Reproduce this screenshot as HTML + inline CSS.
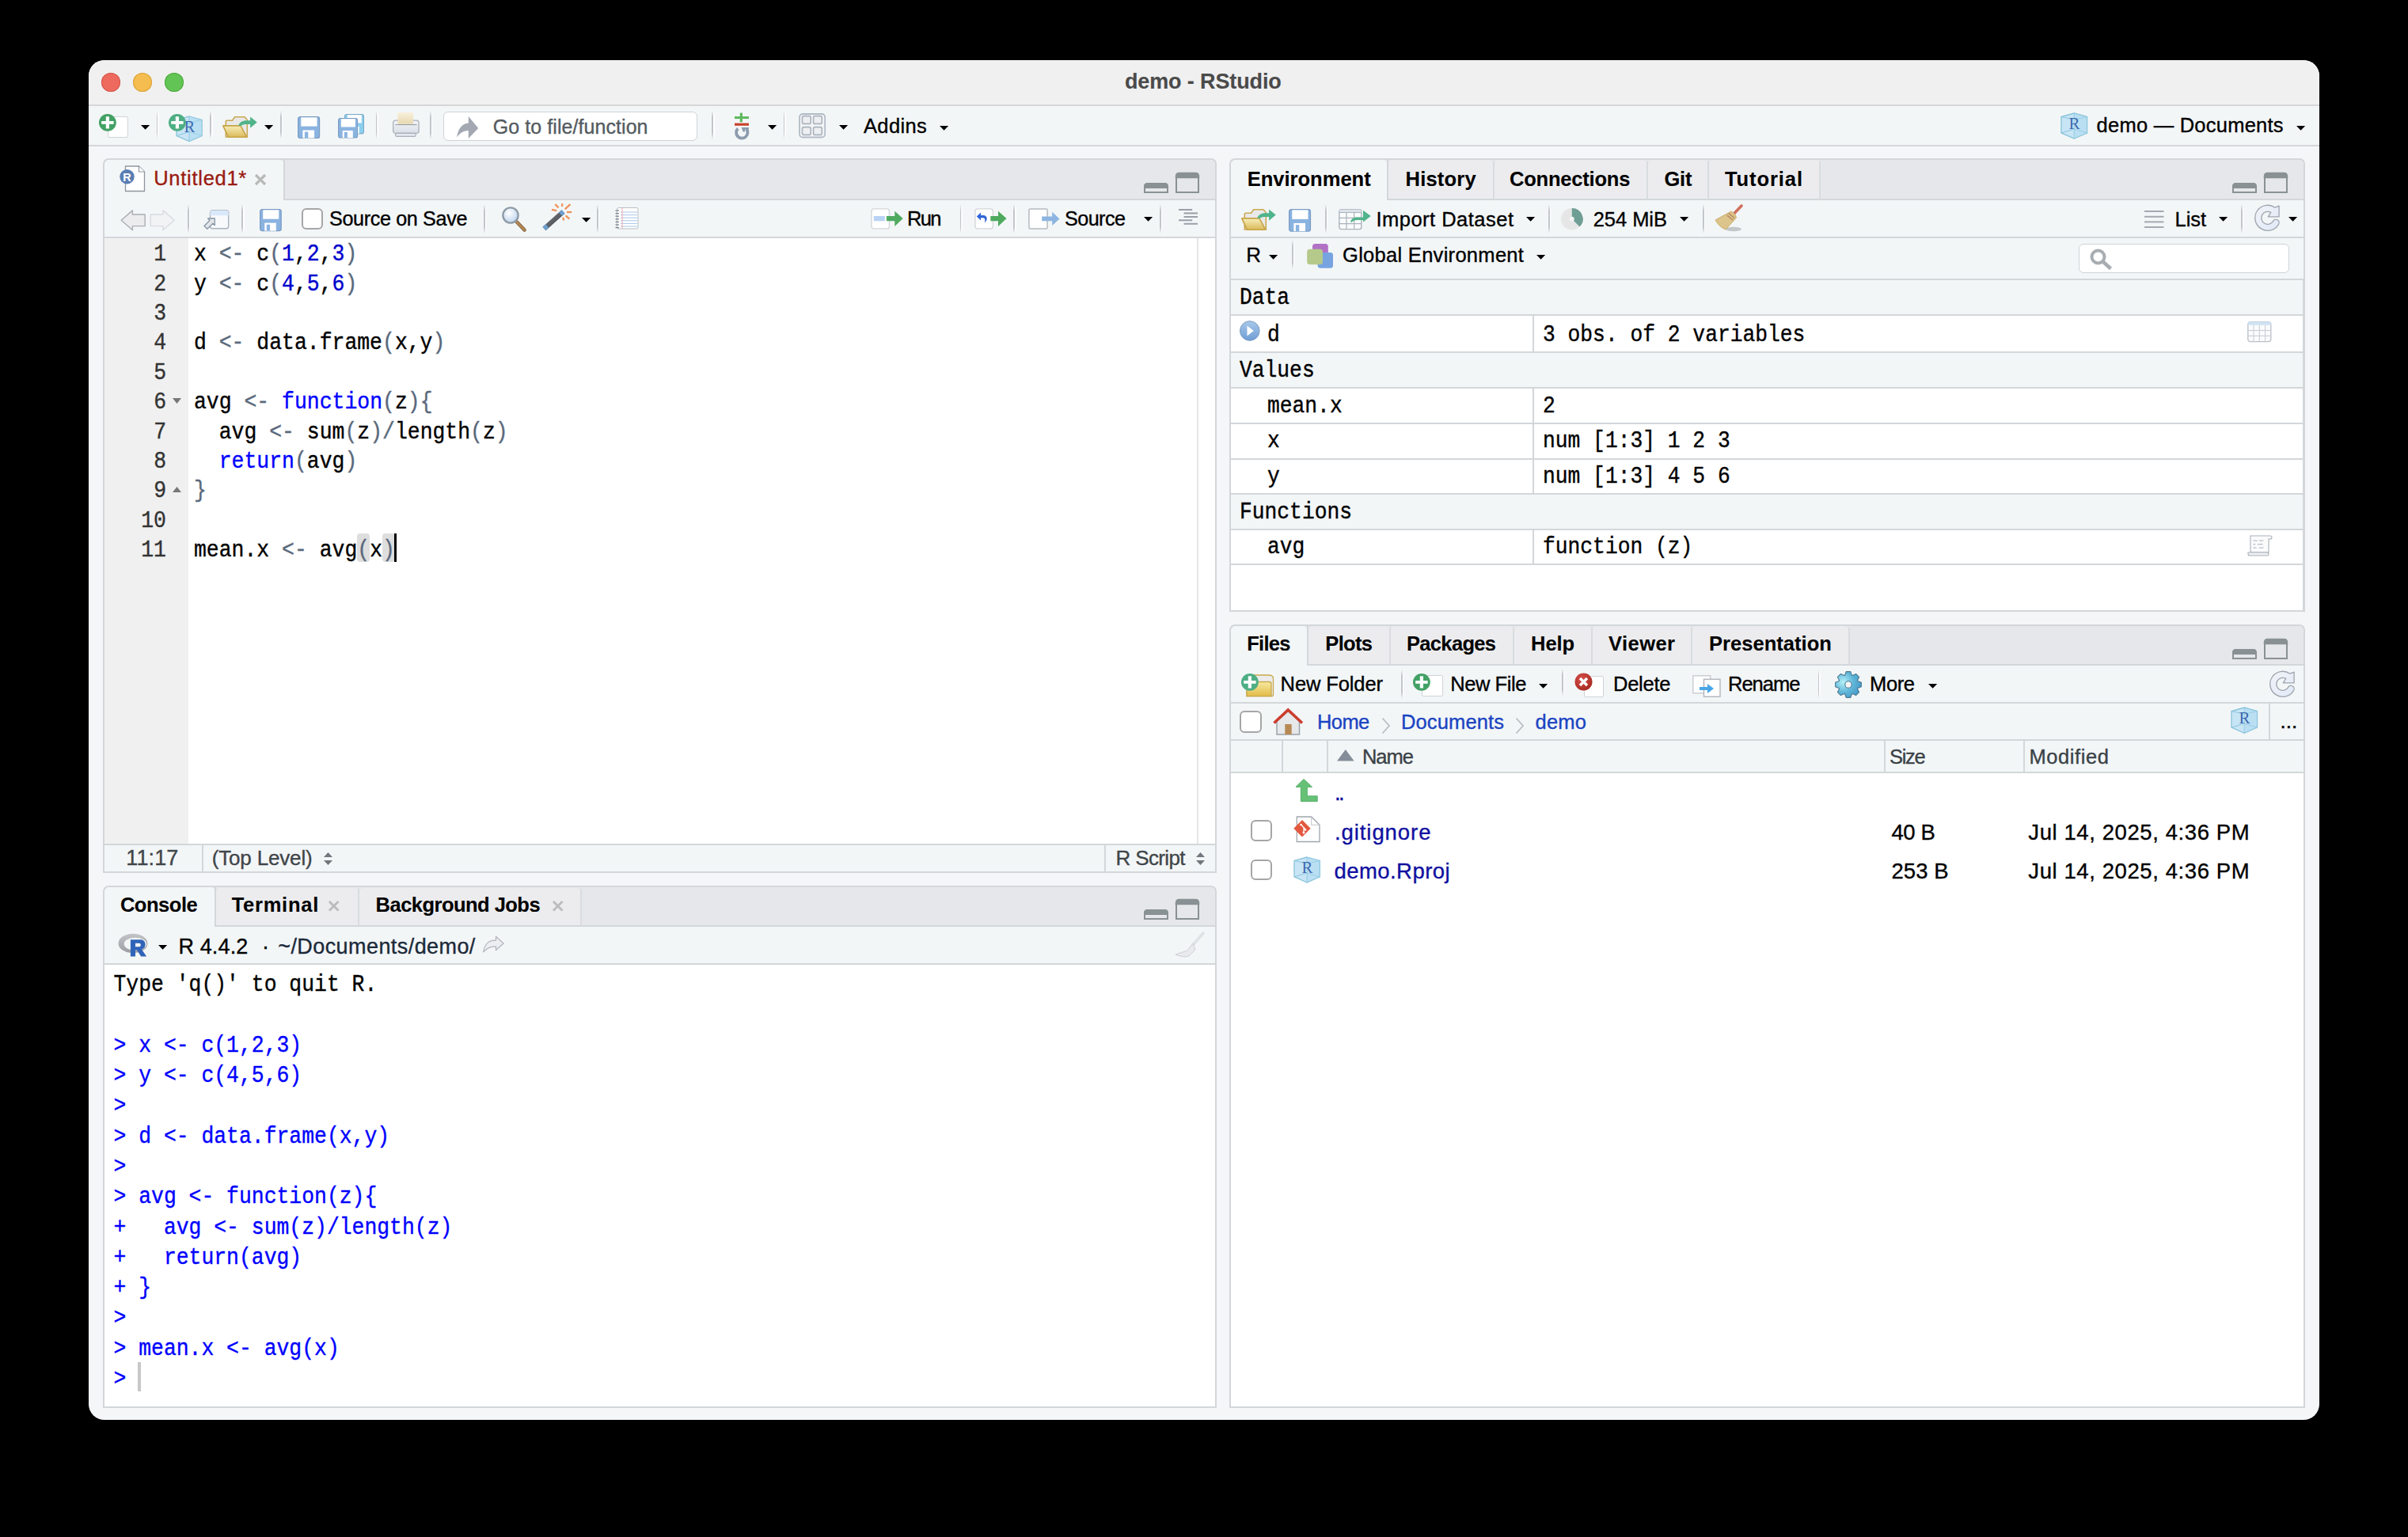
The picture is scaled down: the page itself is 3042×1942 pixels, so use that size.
<!DOCTYPE html>
<html><head><meta charset="utf-8"><title>demo - RStudio</title>
<style>
html,body{margin:0;padding:0;}
body{width:3042px;height:1942px;background:#000;position:relative;overflow:hidden;font-family:'Liberation Sans', sans-serif;}
.a{position:absolute;}
.t{position:absolute;line-height:0;white-space:pre;-webkit-text-stroke:0.35px currentColor;}
svg.a{overflow:visible;}
</style></head><body>
<div class="a" style="left:112.00px;top:76.00px;width:2818.00px;height:1717.50px;background:#f5f6f8;border-radius:20px;"></div><div class="a" style="left:112.00px;top:76.00px;width:2818.00px;height:56.00px;background:#f0f0f0;border-radius:20px 20px 0 0;"></div><div class="a" style="left:112.00px;top:131.50px;width:2818.00px;height:2.20px;background:#d6d6d6;"></div><div class="a" style="left:128.30px;top:91.70px;width:24.00px;height:24.00px;background:#ee6a5f;border-radius:50%;box-shadow:inset 0 0 0 1px #d5554b;"></div><div class="a" style="left:168.20px;top:91.70px;width:24.00px;height:24.00px;background:#f5bd4f;border-radius:50%;box-shadow:inset 0 0 0 1px #d9a23a;"></div><div class="a" style="left:208.10px;top:91.70px;width:24.00px;height:24.00px;background:#61c454;border-radius:50%;box-shadow:inset 0 0 0 1px #4fa93f;"></div><div class="t" style="left:1420.90px;top:102.55px;font-size:27px;color:#4a4a4a;font-weight:bold;-webkit-text-stroke:0.1px currentColor;letter-spacing:-0.121px;">demo - RStudio</div><div class="a" style="left:112.00px;top:133.70px;width:2818.00px;height:48.80px;background:#f3f6f7;"></div><div class="a" style="left:112.00px;top:182.50px;width:2818.00px;height:2.20px;background:#d3d7da;"></div><div class="a" style="left:130.00px;top:199.60px;width:1407.00px;height:903.40px;background:#d3d7da;border-radius:7px 7px 0 0;"></div><div class="a" style="left:132.00px;top:201.60px;width:1403.00px;height:899.40px;background:#ffffff;border-radius:6px 6px 0 0;"></div><div class="a" style="left:132.00px;top:201.60px;width:1403.00px;height:50.40px;background:#e6e7ea;border-radius:6px 6px 0 0;"></div><div class="a" style="left:131.00px;top:251.00px;width:1405.00px;height:2.00px;background:#d3d7da;"></div><div class="a" style="left:132.00px;top:201.60px;width:227.00px;height:51.90px;background:#f3f6f7;border-radius:6px 6px 0 0;"></div><div class="a" style="left:358.00px;top:201.60px;width:2.00px;height:51.40px;background:#d3d7da;"></div><svg class="a" style="left:1445.00px;top:231.00px;" width="31.00" height="13.00" viewBox="0 0 31 13"><path d="M1 12 V5 Q1 1 5 1 H26 Q30 1 30 5 V12 Z" fill="none" stroke="#899194" stroke-width="2"/><path d="M1 6 V5 Q1 1 5 1 H26 Q30 1 30 5 V6 Z" fill="#899194" stroke="#899194" stroke-width="2"/></svg><svg class="a" style="left:1485.00px;top:218.00px;" width="30.00" height="26.00" viewBox="0 0 30 26"><path d="M1 25 V5 Q1 1 5 1 H25 Q29 1 29 5 V25 Z" fill="none" stroke="#899194" stroke-width="2"/><path d="M1 6 V5 Q1 1 5 1 H25 Q29 1 29 5 V6 Z" fill="#899194" stroke="#899194" stroke-width="2.5"/></svg><div class="t" style="left:194.20px;top:225.07px;font-size:25.5px;color:#9a1b12;letter-spacing:0.726px;">Untitled1*</div><div class="a" style="left:132.00px;top:253.00px;width:1403.00px;height:46.00px;background:#f3f6f7;"></div><div class="a" style="left:131.00px;top:298.80px;width:1405.00px;height:2.00px;background:#d3d7da;"></div><div class="t" style="left:416.00px;top:275.68px;font-size:25.2px;color:#000;letter-spacing:-0.371px;">Source on Save</div><div class="t" style="left:1146.00px;top:276.07px;font-size:25.5px;color:#000;letter-spacing:-1.734px;">Run</div><div class="t" style="left:1345.00px;top:276.18px;font-size:25.2px;color:#000;letter-spacing:-0.567px;">Source</div><div class="a" style="left:132.00px;top:301.00px;width:106.00px;height:765.00px;background:#f0f0f0;"></div><div class="a" style="left:1512.25px;top:301.00px;width:1.50px;height:765.00px;background:#e6e6e6;"></div><div class="a" style="left:132.00px;top:1067.00px;width:1403.00px;height:34.00px;background:#f3f6f7;"></div><div class="a" style="left:131.00px;top:1066.00px;width:1405.00px;height:2.00px;background:#d3d7da;"></div><div class="a" style="left:255.00px;top:1068.00px;width:2.00px;height:33.00px;background:#d3d7da;"></div><div class="a" style="left:1395.00px;top:1068.00px;width:2.00px;height:33.00px;background:#d3d7da;"></div><div class="t" style="left:159.30px;top:1084.15px;font-size:27px;color:#3f4549;letter-spacing:0.111px;">11:17</div><div class="t" style="left:267.70px;top:1084.40px;font-size:26px;color:#3f4549;letter-spacing:-0.162px;">(Top Level)</div><div class="t" style="left:1409.60px;top:1084.40px;font-size:26px;color:#3f4549;letter-spacing:-0.665px;">R Script</div><div class="a" style="left:130.00px;top:1119.00px;width:1407.00px;height:660.00px;background:#d3d7da;border-radius:7px 7px 0 0;"></div><div class="a" style="left:132.00px;top:1121.00px;width:1403.00px;height:656.00px;background:#ffffff;border-radius:6px 6px 0 0;"></div><div class="a" style="left:132.00px;top:1121.00px;width:1403.00px;height:48.80px;background:#e6e7ea;border-radius:6px 6px 0 0;"></div><div class="a" style="left:131.00px;top:1168.80px;width:1405.00px;height:2.00px;background:#d3d7da;"></div><div class="a" style="left:132.00px;top:1121.00px;width:139.50px;height:50.30px;background:#f3f6f7;border-radius:6px 6px 0 0;"></div><div class="a" style="left:270.50px;top:1121.00px;width:2.00px;height:49.80px;background:#d3d7da;"></div><div class="a" style="left:272.50px;top:1121.50px;width:180.50px;height:47.30px;background:#ececee;border-radius:6px 6px 0 0;"></div><div class="a" style="left:452.00px;top:1123.00px;width:2.00px;height:46.80px;background:#d9dcdf;"></div><div class="a" style="left:454.00px;top:1121.50px;width:279.70px;height:47.30px;background:#ececee;border-radius:6px 6px 0 0;"></div><div class="a" style="left:732.70px;top:1123.00px;width:2.00px;height:46.80px;background:#d9dcdf;"></div><svg class="a" style="left:1445.00px;top:1149.30px;" width="31.00" height="13.00" viewBox="0 0 31 13"><path d="M1 12 V5 Q1 1 5 1 H26 Q30 1 30 5 V12 Z" fill="none" stroke="#899194" stroke-width="2"/><path d="M1 6 V5 Q1 1 5 1 H26 Q30 1 30 5 V6 Z" fill="#899194" stroke="#899194" stroke-width="2"/></svg><svg class="a" style="left:1485.00px;top:1136.30px;" width="30.00" height="26.00" viewBox="0 0 30 26"><path d="M1 25 V5 Q1 1 5 1 H25 Q29 1 29 5 V25 Z" fill="none" stroke="#899194" stroke-width="2"/><path d="M1 6 V5 Q1 1 5 1 H25 Q29 1 29 5 V6 Z" fill="#899194" stroke="#899194" stroke-width="2.5"/></svg><div class="t" style="left:151.90px;top:1143.08px;font-size:25.5px;color:#000;font-weight:bold;-webkit-text-stroke:0.1px currentColor;letter-spacing:-0.45px;">Console</div><div class="t" style="left:292.70px;top:1143.08px;font-size:25.5px;color:#000;font-weight:bold;-webkit-text-stroke:0.1px currentColor;letter-spacing:0.743px;">Terminal</div><div class="t" style="left:474.60px;top:1143.08px;font-size:25.5px;color:#000;font-weight:bold;-webkit-text-stroke:0.1px currentColor;letter-spacing:-0.527px;">Background Jobs</div><div class="a" style="left:132.00px;top:1171.00px;width:1403.00px;height:46.00px;background:#f3f6f7;"></div><div class="a" style="left:131.00px;top:1216.80px;width:1405.00px;height:2.00px;background:#d3d7da;"></div><div class="t" style="left:225.40px;top:1196.05px;font-size:27px;color:#000;letter-spacing:0.142px;">R 4.4.2</div><div class="t" style="left:331.00px;top:1196.05px;font-size:27px;color:#000;">·</div><div class="t" style="left:351.20px;top:1196.05px;font-size:27px;color:#1c2a3a;letter-spacing:0.426px;">~/Documents/demo/</div><div class="a" style="left:1553.00px;top:199.60px;width:1359.00px;height:573.40px;background:#d3d7da;border-radius:7px 7px 0 0;"></div><div class="a" style="left:1555.00px;top:201.60px;width:1355.00px;height:569.40px;background:#ffffff;border-radius:6px 6px 0 0;"></div><div class="a" style="left:1555.00px;top:201.60px;width:1355.00px;height:50.40px;background:#e6e7ea;border-radius:6px 6px 0 0;"></div><div class="a" style="left:1554.00px;top:251.00px;width:1357.00px;height:2.00px;background:#d3d7da;"></div><div class="a" style="left:1555.00px;top:201.60px;width:197.60px;height:51.90px;background:#f3f6f7;border-radius:6px 6px 0 0;"></div><div class="a" style="left:1751.60px;top:201.60px;width:2.00px;height:51.40px;background:#d3d7da;"></div><div class="a" style="left:1753.60px;top:202.10px;width:132.90px;height:48.90px;background:#ececee;border-radius:6px 6px 0 0;"></div><div class="a" style="left:1885.50px;top:203.60px;width:2.00px;height:48.40px;background:#d9dcdf;"></div><div class="a" style="left:1887.50px;top:202.10px;width:193.50px;height:48.90px;background:#ececee;border-radius:6px 6px 0 0;"></div><div class="a" style="left:2080.00px;top:203.60px;width:2.00px;height:48.40px;background:#d9dcdf;"></div><div class="a" style="left:2082.00px;top:202.10px;width:75.50px;height:48.90px;background:#ececee;border-radius:6px 6px 0 0;"></div><div class="a" style="left:2156.50px;top:203.60px;width:2.00px;height:48.40px;background:#d9dcdf;"></div><div class="a" style="left:2158.50px;top:202.10px;width:140.10px;height:48.90px;background:#ececee;border-radius:6px 6px 0 0;"></div><div class="a" style="left:2297.60px;top:203.60px;width:2.00px;height:48.40px;background:#d9dcdf;"></div><svg class="a" style="left:2820.00px;top:231.00px;" width="31.00" height="13.00" viewBox="0 0 31 13"><path d="M1 12 V5 Q1 1 5 1 H26 Q30 1 30 5 V12 Z" fill="none" stroke="#899194" stroke-width="2"/><path d="M1 6 V5 Q1 1 5 1 H26 Q30 1 30 5 V6 Z" fill="#899194" stroke="#899194" stroke-width="2"/></svg><svg class="a" style="left:2860.00px;top:218.00px;" width="30.00" height="26.00" viewBox="0 0 30 26"><path d="M1 25 V5 Q1 1 5 1 H25 Q29 1 29 5 V25 Z" fill="none" stroke="#899194" stroke-width="2"/><path d="M1 6 V5 Q1 1 5 1 H25 Q29 1 29 5 V6 Z" fill="#899194" stroke="#899194" stroke-width="2.5"/></svg><div class="t" style="left:1575.70px;top:225.57px;font-size:25.5px;color:#000;font-weight:bold;-webkit-text-stroke:0.1px currentColor;letter-spacing:0.014px;">Environment</div><div class="t" style="left:1775.50px;top:225.57px;font-size:25.5px;color:#000;font-weight:bold;-webkit-text-stroke:0.1px currentColor;letter-spacing:0.225px;">History</div><div class="t" style="left:1907.00px;top:225.57px;font-size:25.5px;color:#000;font-weight:bold;-webkit-text-stroke:0.1px currentColor;letter-spacing:-0.203px;">Connections</div><div class="t" style="left:2102.40px;top:225.57px;font-size:25.5px;color:#000;font-weight:bold;-webkit-text-stroke:0.1px currentColor;letter-spacing:-0.21px;">Git</div><div class="t" style="left:2179.00px;top:225.57px;font-size:25.5px;color:#000;font-weight:bold;-webkit-text-stroke:0.1px currentColor;letter-spacing:0.915px;">Tutorial</div><div class="a" style="left:1555.00px;top:253.00px;width:1355.00px;height:46.00px;background:#f3f6f7;"></div><div class="a" style="left:1554.00px;top:298.80px;width:1357.00px;height:2.00px;background:#d3d7da;"></div><div class="t" style="left:1738.50px;top:276.57px;font-size:25.5px;color:#000;letter-spacing:0.482px;">Import Dataset</div><div class="t" style="left:2012.70px;top:276.57px;font-size:25.5px;color:#000;letter-spacing:-0.039px;">254 MiB</div><div class="t" style="left:2747.60px;top:276.57px;font-size:25.5px;color:#000;letter-spacing:-0.093px;">List</div><div class="a" style="left:1555.00px;top:301.00px;width:1355.00px;height:51.50px;background:#f3f6f7;"></div><div class="a" style="left:1554.00px;top:352.00px;width:1357.00px;height:2.00px;background:#d3d7da;"></div><div class="t" style="left:1574.20px;top:321.90px;font-size:26px;color:#000;">R</div><div class="t" style="left:1696.00px;top:322.07px;font-size:25.5px;color:#000;letter-spacing:0.292px;">Global Environment</div><div class="a" style="left:1555.00px;top:354.00px;width:1355.00px;height:43.00px;background:#f3f6f7;"></div><div class="a" style="left:1554.00px;top:397.00px;width:1355.00px;height:2.00px;background:#d3d7da;"></div><div class="t" style="left:1566.00px;top:376.66px;font-size:26.3px;color:#000;font-family:'Liberation Mono', monospace;transform:scaleY(1.12);transform-origin:0 6.84px;">Data</div><div class="a" style="left:1554.00px;top:444.00px;width:1355.00px;height:2.00px;background:#d3d7da;"></div><div class="a" style="left:1936.00px;top:399.00px;width:2.00px;height:46.00px;background:#d3d7da;"></div><div class="t" style="left:1601.00px;top:423.66px;font-size:26.3px;color:#000;font-family:'Liberation Mono', monospace;transform:scaleY(1.12);transform-origin:0 6.84px;">d</div><div class="t" style="left:1949.00px;top:423.66px;font-size:26.3px;color:#000;font-family:'Liberation Mono', monospace;transform:scaleY(1.12);transform-origin:0 6.84px;">3 obs. of 2 variables</div><div class="a" style="left:1555.00px;top:446.00px;width:1355.00px;height:43.00px;background:#f3f6f7;"></div><div class="a" style="left:1554.00px;top:489.00px;width:1355.00px;height:2.00px;background:#d3d7da;"></div><div class="t" style="left:1566.00px;top:468.66px;font-size:26.3px;color:#000;font-family:'Liberation Mono', monospace;transform:scaleY(1.12);transform-origin:0 6.84px;">Values</div><div class="a" style="left:1554.00px;top:534.00px;width:1355.00px;height:2.00px;background:#d3d7da;"></div><div class="a" style="left:1936.00px;top:491.00px;width:2.00px;height:44.00px;background:#d3d7da;"></div><div class="t" style="left:1601.00px;top:513.66px;font-size:26.3px;color:#000;font-family:'Liberation Mono', monospace;transform:scaleY(1.12);transform-origin:0 6.84px;">mean.x</div><div class="t" style="left:1949.00px;top:513.66px;font-size:26.3px;color:#000;font-family:'Liberation Mono', monospace;transform:scaleY(1.12);transform-origin:0 6.84px;">2</div><div class="a" style="left:1554.00px;top:578.50px;width:1355.00px;height:2.00px;background:#d3d7da;"></div><div class="a" style="left:1936.00px;top:536.00px;width:2.00px;height:43.50px;background:#d3d7da;"></div><div class="t" style="left:1601.00px;top:558.16px;font-size:26.3px;color:#000;font-family:'Liberation Mono', monospace;transform:scaleY(1.12);transform-origin:0 6.84px;">x</div><div class="t" style="left:1949.00px;top:558.16px;font-size:26.3px;color:#000;font-family:'Liberation Mono', monospace;transform:scaleY(1.12);transform-origin:0 6.84px;">num [1:3] 1 2 3</div><div class="a" style="left:1554.00px;top:623.00px;width:1355.00px;height:2.00px;background:#d3d7da;"></div><div class="a" style="left:1936.00px;top:580.50px;width:2.00px;height:43.50px;background:#d3d7da;"></div><div class="t" style="left:1601.00px;top:602.66px;font-size:26.3px;color:#000;font-family:'Liberation Mono', monospace;transform:scaleY(1.12);transform-origin:0 6.84px;">y</div><div class="t" style="left:1949.00px;top:602.66px;font-size:26.3px;color:#000;font-family:'Liberation Mono', monospace;transform:scaleY(1.12);transform-origin:0 6.84px;">num [1:3] 4 5 6</div><div class="a" style="left:1555.00px;top:625.00px;width:1355.00px;height:43.00px;background:#f3f6f7;"></div><div class="a" style="left:1554.00px;top:668.00px;width:1355.00px;height:2.00px;background:#d3d7da;"></div><div class="t" style="left:1566.00px;top:647.66px;font-size:26.3px;color:#000;font-family:'Liberation Mono', monospace;transform:scaleY(1.12);transform-origin:0 6.84px;">Functions</div><div class="a" style="left:1554.00px;top:712.00px;width:1355.00px;height:2.00px;background:#d3d7da;"></div><div class="a" style="left:1936.00px;top:670.00px;width:2.00px;height:43.00px;background:#d3d7da;"></div><div class="t" style="left:1601.00px;top:691.66px;font-size:26.3px;color:#000;font-family:'Liberation Mono', monospace;transform:scaleY(1.12);transform-origin:0 6.84px;">avg</div><div class="t" style="left:1949.00px;top:691.66px;font-size:26.3px;color:#000;font-family:'Liberation Mono', monospace;transform:scaleY(1.12);transform-origin:0 6.84px;">function (z)</div><div class="a" style="left:2908.75px;top:353.00px;width:1.50px;height:418.00px;background:#d3d7da;"></div><div class="a" style="left:1553.00px;top:788.50px;width:1359.00px;height:990.50px;background:#d3d7da;border-radius:7px 7px 0 0;"></div><div class="a" style="left:1555.00px;top:790.50px;width:1355.00px;height:986.50px;background:#ffffff;border-radius:6px 6px 0 0;"></div><div class="a" style="left:1555.00px;top:790.50px;width:1355.00px;height:49.50px;background:#e6e7ea;border-radius:6px 6px 0 0;"></div><div class="a" style="left:1554.00px;top:839.00px;width:1357.00px;height:2.00px;background:#d3d7da;"></div><div class="a" style="left:1555.00px;top:790.50px;width:97.40px;height:51.00px;background:#f3f6f7;border-radius:6px 6px 0 0;"></div><div class="a" style="left:1651.40px;top:790.50px;width:2.00px;height:50.50px;background:#d3d7da;"></div><div class="a" style="left:1653.40px;top:791.00px;width:102.20px;height:48.00px;background:#ececee;border-radius:6px 6px 0 0;"></div><div class="a" style="left:1754.60px;top:792.50px;width:2.00px;height:47.50px;background:#d9dcdf;"></div><div class="a" style="left:1756.60px;top:791.00px;width:155.00px;height:48.00px;background:#ececee;border-radius:6px 6px 0 0;"></div><div class="a" style="left:1910.60px;top:792.50px;width:2.00px;height:47.50px;background:#d9dcdf;"></div><div class="a" style="left:1912.60px;top:791.00px;width:98.10px;height:48.00px;background:#ececee;border-radius:6px 6px 0 0;"></div><div class="a" style="left:2009.70px;top:792.50px;width:2.00px;height:47.50px;background:#d9dcdf;"></div><div class="a" style="left:2011.70px;top:791.00px;width:125.10px;height:48.00px;background:#ececee;border-radius:6px 6px 0 0;"></div><div class="a" style="left:2135.80px;top:792.50px;width:2.00px;height:47.50px;background:#d9dcdf;"></div><div class="a" style="left:2137.80px;top:791.00px;width:197.70px;height:48.00px;background:#ececee;border-radius:6px 6px 0 0;"></div><div class="a" style="left:2334.50px;top:792.50px;width:2.00px;height:47.50px;background:#d9dcdf;"></div><svg class="a" style="left:2820.00px;top:819.80px;" width="31.00" height="13.00" viewBox="0 0 31 13"><path d="M1 12 V5 Q1 1 5 1 H26 Q30 1 30 5 V12 Z" fill="none" stroke="#899194" stroke-width="2"/><path d="M1 6 V5 Q1 1 5 1 H26 Q30 1 30 5 V6 Z" fill="#899194" stroke="#899194" stroke-width="2"/></svg><svg class="a" style="left:2860.00px;top:806.80px;" width="30.00" height="26.00" viewBox="0 0 30 26"><path d="M1 25 V5 Q1 1 5 1 H25 Q29 1 29 5 V25 Z" fill="none" stroke="#899194" stroke-width="2"/><path d="M1 6 V5 Q1 1 5 1 H25 Q29 1 29 5 V6 Z" fill="#899194" stroke="#899194" stroke-width="2.5"/></svg><div class="t" style="left:1575.20px;top:813.08px;font-size:25.5px;color:#000;font-weight:bold;-webkit-text-stroke:0.1px currentColor;letter-spacing:-0.729px;">Files</div><div class="t" style="left:1674.30px;top:813.08px;font-size:25.5px;color:#000;font-weight:bold;-webkit-text-stroke:0.1px currentColor;letter-spacing:-0.662px;">Plots</div><div class="t" style="left:1777.00px;top:813.08px;font-size:25.5px;color:#000;font-weight:bold;-webkit-text-stroke:0.1px currentColor;letter-spacing:-0.669px;">Packages</div><div class="t" style="left:1934.00px;top:813.08px;font-size:25.5px;color:#000;font-weight:bold;-webkit-text-stroke:0.1px currentColor;letter-spacing:-0.019px;">Help</div><div class="t" style="left:2032.00px;top:813.08px;font-size:25.5px;color:#000;font-weight:bold;-webkit-text-stroke:0.1px currentColor;letter-spacing:0.449px;">Viewer</div><div class="t" style="left:2159.00px;top:813.08px;font-size:25.5px;color:#000;font-weight:bold;-webkit-text-stroke:0.1px currentColor;letter-spacing:0.041px;">Presentation</div><div class="a" style="left:1555.00px;top:841.00px;width:1355.00px;height:46.20px;background:#f3f6f7;"></div><div class="a" style="left:1554.00px;top:887.00px;width:1357.00px;height:2.00px;background:#d3d7da;"></div><div class="t" style="left:1617.60px;top:863.58px;font-size:25.5px;color:#000;letter-spacing:-0.109px;">New Folder</div><div class="t" style="left:1832.20px;top:863.58px;font-size:25.5px;color:#000;letter-spacing:-0.428px;">New File</div><div class="t" style="left:2038.00px;top:863.58px;font-size:25.5px;color:#000;letter-spacing:-0.264px;">Delete</div><div class="t" style="left:2183.00px;top:863.58px;font-size:25.5px;color:#000;letter-spacing:-0.998px;">Rename</div><div class="t" style="left:2362.00px;top:863.58px;font-size:25.5px;color:#000;letter-spacing:-0.363px;">More</div><div class="a" style="left:1555.00px;top:889.00px;width:1355.00px;height:45.00px;background:#f3f6f7;"></div><div class="a" style="left:1554.00px;top:934.00px;width:1357.00px;height:2.00px;background:#d3d7da;"></div><div class="t" style="left:1664.00px;top:911.58px;font-size:25.5px;color:#1a44c2;letter-spacing:-0.578px;">Home</div><div class="t" style="left:1770.00px;top:911.58px;font-size:25.5px;color:#1a44c2;letter-spacing:0.128px;">Documents</div><div class="t" style="left:1939.60px;top:911.58px;font-size:25.5px;color:#1a44c2;letter-spacing:0.175px;">demo</div><div class="a" style="left:2866.00px;top:889.00px;width:2.00px;height:45.00px;background:#d3d7da;"></div><div class="a" style="left:1555.00px;top:936.00px;width:1355.00px;height:39.00px;background:#f3f6f7;"></div><div class="a" style="left:1554.00px;top:975.00px;width:1357.00px;height:2.00px;background:#d3d7da;"></div><div class="a" style="left:1619.00px;top:936.00px;width:2.00px;height:39.00px;background:#d3d7da;"></div><div class="a" style="left:1676.00px;top:936.00px;width:2.00px;height:39.00px;background:#d3d7da;"></div><div class="a" style="left:2380.20px;top:936.00px;width:2.00px;height:39.00px;background:#d3d7da;"></div><div class="a" style="left:2556.00px;top:936.00px;width:2.00px;height:39.00px;background:#d3d7da;"></div><div class="t" style="left:1721.00px;top:956.08px;font-size:25.5px;color:#3a4247;letter-spacing:-1.045px;">Name</div><div class="t" style="left:2387.00px;top:956.08px;font-size:25.5px;color:#3a4247;letter-spacing:-1.299px;">Size</div><div class="t" style="left:2563.50px;top:956.08px;font-size:25.5px;color:#3a4247;letter-spacing:0.587px;">Modified</div><div class="t" style="left:1686.00px;top:1002.38px;font-size:27.5px;color:#1010a0;letter-spacing:-2.59px;">..</div><div class="t" style="left:1685.90px;top:1051.58px;font-size:27.5px;color:#1010a0;letter-spacing:0.941px;">.gitignore</div><div class="t" style="left:1685.40px;top:1100.58px;font-size:27.5px;color:#1010a0;letter-spacing:0.45px;">demo.Rproj</div><div class="t" style="left:2389.40px;top:1051.58px;font-size:27.5px;color:#000;letter-spacing:-0.389px;">40 B</div><div class="t" style="left:2389.40px;top:1100.78px;font-size:27.5px;color:#000;letter-spacing:0.086px;">253 B</div><div class="t" style="left:2562.30px;top:1051.58px;font-size:27.5px;color:#000;letter-spacing:0.593px;">Jul 14, 2025, 4:36 PM</div><div class="t" style="left:2562.30px;top:1100.78px;font-size:27.5px;color:#000;letter-spacing:0.593px;">Jul 14, 2025, 4:36 PM</div><div class="t" style="left:622.80px;top:159.75px;font-size:25px;color:#555b60;letter-spacing:0.064px;">Go to file/function</div><div class="t" style="left:1091.00px;top:158.57px;font-size:25.5px;color:#000;letter-spacing:0.364px;">Addins</div><div class="t" style="left:2648.60px;top:158.07px;font-size:25.5px;color:#000;letter-spacing:0.238px;">demo — Documents</div><div class="a" style="left:451.31px;top:674.40px;width:15.87px;height:36.00px;background:#dedede;border-radius:4px;"></div><div class="a" style="left:483.05px;top:674.40px;width:15.87px;height:36.00px;background:#dedede;border-radius:4px;"></div><div class="t" style="left:194.13px;top:322.32px;font-size:26.45px;color:#333333;font-family:'Liberation Mono', monospace;transform:scaleY(1.12);transform-origin:0 6.88px;">1</div><div class="t" style="left:245.00px;top:322.32px;font-size:26.45px;color:#000;font-family:'Liberation Mono', monospace;transform:scaleY(1.12);transform-origin:0 6.88px;"><span style="color:#000">x </span><span style="color:#5a697c">&lt;-</span><span style="color:#000"> c</span><span style="color:#5a697c">(</span><span style="color:#0000cd">1</span><span style="color:#000">,</span><span style="color:#0000cd">2</span><span style="color:#000">,</span><span style="color:#0000cd">3</span><span style="color:#5a697c">)</span></div><div class="t" style="left:194.13px;top:359.69px;font-size:26.45px;color:#333333;font-family:'Liberation Mono', monospace;transform:scaleY(1.12);transform-origin:0 6.88px;">2</div><div class="t" style="left:245.00px;top:359.69px;font-size:26.45px;color:#000;font-family:'Liberation Mono', monospace;transform:scaleY(1.12);transform-origin:0 6.88px;"><span style="color:#000">y </span><span style="color:#5a697c">&lt;-</span><span style="color:#000"> c</span><span style="color:#5a697c">(</span><span style="color:#0000cd">4</span><span style="color:#000">,</span><span style="color:#0000cd">5</span><span style="color:#000">,</span><span style="color:#0000cd">6</span><span style="color:#5a697c">)</span></div><div class="t" style="left:194.13px;top:397.06px;font-size:26.45px;color:#333333;font-family:'Liberation Mono', monospace;transform:scaleY(1.12);transform-origin:0 6.88px;">3</div><div class="t" style="left:194.13px;top:434.43px;font-size:26.45px;color:#333333;font-family:'Liberation Mono', monospace;transform:scaleY(1.12);transform-origin:0 6.88px;">4</div><div class="t" style="left:245.00px;top:434.43px;font-size:26.45px;color:#000;font-family:'Liberation Mono', monospace;transform:scaleY(1.12);transform-origin:0 6.88px;"><span style="color:#000">d </span><span style="color:#5a697c">&lt;-</span><span style="color:#000"> data.frame</span><span style="color:#5a697c">(</span><span style="color:#000">x,y</span><span style="color:#5a697c">)</span></div><div class="t" style="left:194.13px;top:471.80px;font-size:26.45px;color:#333333;font-family:'Liberation Mono', monospace;transform:scaleY(1.12);transform-origin:0 6.88px;">5</div><div class="t" style="left:194.13px;top:509.17px;font-size:26.45px;color:#333333;font-family:'Liberation Mono', monospace;transform:scaleY(1.12);transform-origin:0 6.88px;">6</div><div class="t" style="left:245.00px;top:509.17px;font-size:26.45px;color:#000;font-family:'Liberation Mono', monospace;transform:scaleY(1.12);transform-origin:0 6.88px;"><span style="color:#000">avg </span><span style="color:#5a697c">&lt;-</span><span style="color:#000"> </span><span style="color:#0000ff">function</span><span style="color:#5a697c">(</span><span style="color:#000">z</span><span style="color:#5a697c">)</span><span style="color:#5a697c">{</span></div><div class="t" style="left:194.13px;top:546.54px;font-size:26.45px;color:#333333;font-family:'Liberation Mono', monospace;transform:scaleY(1.12);transform-origin:0 6.88px;">7</div><div class="t" style="left:245.00px;top:546.54px;font-size:26.45px;color:#000;font-family:'Liberation Mono', monospace;transform:scaleY(1.12);transform-origin:0 6.88px;"><span style="color:#000">  avg </span><span style="color:#5a697c">&lt;-</span><span style="color:#000"> sum</span><span style="color:#5a697c">(</span><span style="color:#000">z</span><span style="color:#5a697c">)</span><span style="color:#5a697c">/</span><span style="color:#000">length</span><span style="color:#5a697c">(</span><span style="color:#000">z</span><span style="color:#5a697c">)</span></div><div class="t" style="left:194.13px;top:583.91px;font-size:26.45px;color:#333333;font-family:'Liberation Mono', monospace;transform:scaleY(1.12);transform-origin:0 6.88px;">8</div><div class="t" style="left:245.00px;top:583.91px;font-size:26.45px;color:#000;font-family:'Liberation Mono', monospace;transform:scaleY(1.12);transform-origin:0 6.88px;"><span style="color:#000">  </span><span style="color:#0000ff">return</span><span style="color:#5a697c">(</span><span style="color:#000">avg</span><span style="color:#5a697c">)</span></div><div class="t" style="left:194.13px;top:621.28px;font-size:26.45px;color:#333333;font-family:'Liberation Mono', monospace;transform:scaleY(1.12);transform-origin:0 6.88px;">9</div><div class="t" style="left:245.00px;top:621.28px;font-size:26.45px;color:#000;font-family:'Liberation Mono', monospace;transform:scaleY(1.12);transform-origin:0 6.88px;"><span style="color:#5a697c">}</span></div><div class="t" style="left:178.26px;top:658.65px;font-size:26.45px;color:#333333;font-family:'Liberation Mono', monospace;transform:scaleY(1.12);transform-origin:0 6.88px;">10</div><div class="t" style="left:178.26px;top:696.02px;font-size:26.45px;color:#333333;font-family:'Liberation Mono', monospace;transform:scaleY(1.12);transform-origin:0 6.88px;">11</div><div class="t" style="left:245.00px;top:696.02px;font-size:26.45px;color:#000;font-family:'Liberation Mono', monospace;transform:scaleY(1.12);transform-origin:0 6.88px;"><span style="color:#000">mean.x </span><span style="color:#5a697c">&lt;-</span><span style="color:#000"> avg</span><span style="color:#5a697c">(</span><span style="color:#000">x</span><span style="color:#5a697c">)</span></div><div class="a" style="left:498.00px;top:674.40px;width:2.50px;height:36.00px;background:#000;"></div><svg class="a" style="left:217.50px;top:503.05px;" width="11.00" height="7.00" viewBox="0 0 11 7"><path d="M0 0 L11 0 L5.5 7 Z" fill="#777"/></svg><svg class="a" style="left:217.50px;top:615.16px;" width="11.00" height="7.00" viewBox="0 0 11 7"><path d="M0 7 L11 7 L5.5 0 Z" fill="#777"/></svg><div class="t" style="left:143.50px;top:1245.13px;font-size:26.41px;color:#000;font-family:'Liberation Mono', monospace;transform:scaleY(1.12);transform-origin:0 6.87px;">Type &#x27;q()&#x27; to quit R.</div><div class="t" style="left:143.50px;top:1321.73px;font-size:26.41px;color:#0000ff;font-family:'Liberation Mono', monospace;transform:scaleY(1.12);transform-origin:0 6.87px;">&gt; x &lt;- c(1,2,3)</div><div class="t" style="left:143.50px;top:1360.03px;font-size:26.41px;color:#0000ff;font-family:'Liberation Mono', monospace;transform:scaleY(1.12);transform-origin:0 6.87px;">&gt; y &lt;- c(4,5,6)</div><div class="t" style="left:143.50px;top:1398.33px;font-size:26.41px;color:#0000ff;font-family:'Liberation Mono', monospace;transform:scaleY(1.12);transform-origin:0 6.87px;">&gt;</div><div class="t" style="left:143.50px;top:1436.63px;font-size:26.41px;color:#0000ff;font-family:'Liberation Mono', monospace;transform:scaleY(1.12);transform-origin:0 6.87px;">&gt; d &lt;- data.frame(x,y)</div><div class="t" style="left:143.50px;top:1474.93px;font-size:26.41px;color:#0000ff;font-family:'Liberation Mono', monospace;transform:scaleY(1.12);transform-origin:0 6.87px;">&gt;</div><div class="t" style="left:143.50px;top:1513.23px;font-size:26.41px;color:#0000ff;font-family:'Liberation Mono', monospace;transform:scaleY(1.12);transform-origin:0 6.87px;">&gt; avg &lt;- function(z){</div><div class="t" style="left:143.50px;top:1551.53px;font-size:26.41px;color:#0000ff;font-family:'Liberation Mono', monospace;transform:scaleY(1.12);transform-origin:0 6.87px;">+   avg &lt;- sum(z)/length(z)</div><div class="t" style="left:143.50px;top:1589.83px;font-size:26.41px;color:#0000ff;font-family:'Liberation Mono', monospace;transform:scaleY(1.12);transform-origin:0 6.87px;">+   return(avg)</div><div class="t" style="left:143.50px;top:1628.13px;font-size:26.41px;color:#0000ff;font-family:'Liberation Mono', monospace;transform:scaleY(1.12);transform-origin:0 6.87px;">+ }</div><div class="t" style="left:143.50px;top:1666.43px;font-size:26.41px;color:#0000ff;font-family:'Liberation Mono', monospace;transform:scaleY(1.12);transform-origin:0 6.87px;">&gt;</div><div class="t" style="left:143.50px;top:1704.73px;font-size:26.41px;color:#0000ff;font-family:'Liberation Mono', monospace;transform:scaleY(1.12);transform-origin:0 6.87px;">&gt; mean.x &lt;- avg(x)</div><div class="t" style="left:143.50px;top:1743.03px;font-size:26.41px;color:#0000ff;font-family:'Liberation Mono', monospace;transform:scaleY(1.12);transform-origin:0 6.87px;">&gt; </div><div class="a" style="left:174.00px;top:1721.00px;width:4.00px;height:36.70px;background:#c8c8c8;"></div><div class="a" style="left:136.30px;top:146.60px;width:26.10px;height:27.70px;background:#fff;border:1.5px solid #cfd4d8;border-radius:2px;box-sizing:border-box;"></div><svg class="a" style="left:124.00px;top:143.10px;" width="23.80" height="23.80" viewBox="0 0 23.8 23.8"><circle cx="11.9" cy="11.9" r="10.9" fill="#43a165"/><rect x="4.2" y="10.0" width="15.4" height="3.8" fill="#fff"/><rect x="9.8" y="4.300000000000001" width="4.2" height="15.2" fill="#fff"/></svg><svg class="a" style="left:177.90px;top:158.10px;" width="11.20" height="5.80" viewBox="0 0 11.2 5.8"><path d="M0 0 H11.2 L5.6 5.8 Z" fill="#000"/></svg><div class="a" style="left:197.70px;top:139.70px;width:1.70px;height:35.30px;background:linear-gradient(to bottom, rgba(190,194,198,0) 0%, #c2c6ca 22%, #c2c6ca 78%, rgba(190,194,198,0) 100%);"></div><div class="a" style="left:199.40px;top:139.70px;width:1.60px;height:35.30px;background:linear-gradient(to bottom, rgba(255,255,255,0) 0%, #ffffff 22%, #ffffff 78%, rgba(255,255,255,0) 100%);"></div><svg class="a" style="left:222.80px;top:147.20px;" width="32.10" height="31.50" viewBox="0 0 32.1 31.5"><g transform="scale(0.9847,0.9813)"><path d="M16.3 0 L32.6 4.5 V25 L16.3 32.1 L0 25 V4.5 Z" fill="#c8e5f6" stroke="#86c2d8" stroke-width="1.3"/><path d="M16.3 0 V32.1 M0 4.5 L16.3 8.3 L32.6 4.5 M0 25 L16.3 20 L32.6 25" fill="none" stroke="#8cc6da" stroke-width="1"/><path d="M16.3 0 L32.6 4.5 V25 L16.3 32.1 Z" fill="#a9d6f0" opacity="0.45"/><text x="16.6" y="20.2" font-family="Liberation Serif" font-size="21" fill="#3d68b0" text-anchor="middle">R</text></g></svg><svg class="a" style="left:211.80px;top:143.10px;" width="23.80" height="23.80" viewBox="0 0 23.8 23.8"><circle cx="11.9" cy="11.9" r="10.9" fill="#4eae84"/><rect x="4.2" y="10.0" width="15.4" height="3.8" fill="#fff"/><rect x="9.8" y="4.300000000000001" width="4.2" height="15.2" fill="#fff"/></svg><div class="a" style="left:265.30px;top:139.70px;width:1.70px;height:35.30px;background:linear-gradient(to bottom, rgba(190,194,198,0) 0%, #c2c6ca 22%, #c2c6ca 78%, rgba(190,194,198,0) 100%);"></div><div class="a" style="left:267.00px;top:139.70px;width:1.60px;height:35.30px;background:linear-gradient(to bottom, rgba(255,255,255,0) 0%, #ffffff 22%, #ffffff 78%, rgba(255,255,255,0) 100%);"></div><svg class="a" style="left:281.00px;top:147.00px;" width="45.00" height="28.00" viewBox="0 0 45 28"><defs><linearGradient id="fg" x1="0" y1="0" x2="0" y2="1"><stop offset="0" stop-color="#f6efb9"/><stop offset="1" stop-color="#dbb95a"/></linearGradient></defs><path d="M4.3 26 V6.4 Q4.3 5.2 5.6 5.2 H12.6 L15.6 0.8 H28 L31.3 4.5 V26 Z" fill="#e9e9e9" stroke="#c9a94f" stroke-width="1.6"/><path d="M0.8 11.9 H22.9 L30.8 26.2 H7.4 Z" fill="url(#fg)" stroke="#c6a447" stroke-width="1.6" stroke-linejoin="round"/><path d="M20.3 11.3 C22.5 6.5 26.5 5.3 30.5 5.3 H35.1 V0.4 L43.8 7.6 L35.1 14.8 V10.1 H30.5 C27.5 10.1 25 10.6 23.2 12.2 Z" fill="#50b48b"/></svg><svg class="a" style="left:333.80px;top:158.20px;" width="11.20" height="5.80" viewBox="0 0 11.2 5.8"><path d="M0 0 H11.2 L5.6 5.8 Z" fill="#000"/></svg><div class="a" style="left:353.90px;top:139.70px;width:1.70px;height:35.30px;background:linear-gradient(to bottom, rgba(190,194,198,0) 0%, #c2c6ca 22%, #c2c6ca 78%, rgba(190,194,198,0) 100%);"></div><div class="a" style="left:355.60px;top:139.70px;width:1.60px;height:35.30px;background:linear-gradient(to bottom, rgba(255,255,255,0) 0%, #ffffff 22%, #ffffff 78%, rgba(255,255,255,0) 100%);"></div><svg class="a" style="left:375.60px;top:146.50px;" width="28.20" height="28.10" viewBox="0 0 28.2 28.1"><g transform="scale(1.0000,1.0000)"><rect x="0.6" y="0.6" width="27" height="26.9" rx="2.6" fill="#8ab3e0" stroke="#7a9cc2" stroke-width="1.2"/><rect x="4.3" y="1.3" width="20.3" height="11.3" fill="#fff"/><rect x="6.4" y="17.5" width="14.7" height="10" fill="#fff"/><rect x="8.9" y="19.6" width="4.4" height="7.9" fill="#8ab3e0"/></g></svg><svg class="a" style="left:435.30px;top:144.40px;" width="25.00" height="25.40" viewBox="0 0 25 25.4"><g transform="scale(0.8865,0.9039)"><rect x="0.6" y="0.6" width="27" height="26.9" rx="2.6" fill="#8ccfee" stroke="#7aa9c8" stroke-width="1.2"/><rect x="4.3" y="1.3" width="20.3" height="11.3" fill="#fff"/><rect x="6.4" y="17.5" width="14.7" height="10" fill="#fff"/><rect x="8.9" y="19.6" width="4.4" height="7.9" fill="#8ccfee"/></g></svg><svg class="a" style="left:426.50px;top:149.00px;" width="25.10" height="25.60" viewBox="0 0 25.1 25.6"><g transform="scale(0.8901,0.9110)"><rect x="0.6" y="0.6" width="27" height="26.9" rx="2.6" fill="#8ab3e0" stroke="#7a9cc2" stroke-width="1.2"/><rect x="4.3" y="1.3" width="20.3" height="11.3" fill="#fff"/><rect x="6.4" y="17.5" width="14.7" height="10" fill="#fff"/><rect x="8.9" y="19.6" width="4.4" height="7.9" fill="#8ab3e0"/></g></svg><div class="a" style="left:474.80px;top:140.00px;width:1.70px;height:36.00px;background:linear-gradient(to bottom, rgba(190,194,198,0) 0%, #c2c6ca 22%, #c2c6ca 78%, rgba(190,194,198,0) 100%);"></div><div class="a" style="left:476.50px;top:140.00px;width:1.60px;height:36.00px;background:linear-gradient(to bottom, rgba(255,255,255,0) 0%, #ffffff 22%, #ffffff 78%, rgba(255,255,255,0) 100%);"></div><svg class="a" style="left:495.50px;top:142.00px;" width="34.00" height="31.00" viewBox="0 0 34 31"><defs><linearGradient id="pp" x1="0" y1="0" x2="0" y2="1"><stop offset="0" stop-color="#f7f0dc"/><stop offset="1" stop-color="#e8d9b0"/></linearGradient><linearGradient id="pb" x1="0" y1="0" x2="0" y2="1"><stop offset="0" stop-color="#f4f5f8"/><stop offset="1" stop-color="#d9dfe7"/></linearGradient></defs><rect x="6.5" y="0.2" width="19.5" height="16" rx="1" fill="url(#pp)"/><rect x="0.7" y="10.1" width="32.4" height="16.3" rx="3.2" fill="url(#pb)" stroke="#a9b0b8" stroke-width="1.3"/><rect x="6.5" y="0.2" width="19.5" height="14.5" rx="1" fill="url(#pp)"/><path d="M3.5 15.6 H30.5" stroke="#8d949b" stroke-width="1"/><rect x="3.7" y="26.4" width="25.5" height="4" rx="1.2" fill="#e4e8ee" stroke="#a9b0b8" stroke-width="1.2"/></svg><div class="a" style="left:542.90px;top:140.00px;width:1.70px;height:36.00px;background:linear-gradient(to bottom, rgba(190,194,198,0) 0%, #c2c6ca 22%, #c2c6ca 78%, rgba(190,194,198,0) 100%);"></div><div class="a" style="left:544.60px;top:140.00px;width:1.60px;height:36.00px;background:linear-gradient(to bottom, rgba(255,255,255,0) 0%, #ffffff 22%, #ffffff 78%, rgba(255,255,255,0) 100%);"></div><div class="a" style="left:559.60px;top:140.80px;width:321.10px;height:37.20px;background:#fff;border:1.6px solid #d0d4d8;border-radius:6px;box-sizing:border-box;"></div><svg class="a" style="left:576.90px;top:146.50px;" width="27.60" height="28.00" viewBox="0 0 27.6 28"><g transform="scale(0.9857,1.0000)"><path d="M0 26.7 C1.5 17 6 8.8 15 8.4 V0 L27.6 15.1 L15 28 V18.1 C8.5 17.9 3.5 21.5 0 26.7 Z" fill="#a3a8b3"/></g></svg><div class="a" style="left:899.40px;top:140.00px;width:1.70px;height:36.00px;background:linear-gradient(to bottom, rgba(190,194,198,0) 0%, #c2c6ca 22%, #c2c6ca 78%, rgba(190,194,198,0) 100%);"></div><div class="a" style="left:901.10px;top:140.00px;width:1.60px;height:36.00px;background:linear-gradient(to bottom, rgba(255,255,255,0) 0%, #ffffff 22%, #ffffff 78%, rgba(255,255,255,0) 100%);"></div><svg class="a" style="left:927.00px;top:141.50px;" width="20.00" height="36.00" viewBox="0 0 20 36"><rect x="1" y="5.1" width="18" height="3" fill="#5cb85c"/><rect x="7.8" y="0.6" width="3.1" height="11.7" fill="#5cb85c"/><rect x="1" y="13.6" width="18" height="3.2" fill="#c9432e"/><path d="M5.2 20.3 A7.2 7.2 0 1 0 15.8 20.8" fill="none" stroke="#8c9cae" stroke-width="3.8"/><path d="M9.6 19 H19 V21.5 H14 V24.5 H11.6 Z" fill="#8c9cae"/></svg><svg class="a" style="left:969.80px;top:158.30px;" width="11.20" height="5.80" viewBox="0 0 11.2 5.8"><path d="M0 0 H11.2 L5.6 5.8 Z" fill="#000"/></svg><div class="a" style="left:989.60px;top:140.00px;width:1.70px;height:36.00px;background:linear-gradient(to bottom, rgba(190,194,198,0) 0%, #c2c6ca 22%, #c2c6ca 78%, rgba(190,194,198,0) 100%);"></div><div class="a" style="left:991.30px;top:140.00px;width:1.60px;height:36.00px;background:linear-gradient(to bottom, rgba(255,255,255,0) 0%, #ffffff 22%, #ffffff 78%, rgba(255,255,255,0) 100%);"></div><svg class="a" style="left:1009.40px;top:143.00px;" width="34.20" height="31.50" viewBox="0 0 34.2 31.5"><rect x="1" y="1" width="32.2" height="29.5" rx="4" fill="#f3f4f6" stroke="#b4bcc6" stroke-width="1.8"/><g fill="#eeeff2" stroke="#a9b3bd" stroke-width="1.6"><rect x="4.5" y="3.6" width="10.7" height="9.8" rx="2"/><rect x="18.6" y="3.6" width="10.7" height="9.8" rx="2"/><rect x="4.5" y="17.6" width="10.7" height="9.8" rx="2"/><rect x="18.6" y="17.6" width="10.7" height="9.8" rx="2"/></g></svg><svg class="a" style="left:1059.90px;top:158.30px;" width="11.20" height="5.80" viewBox="0 0 11.2 5.8"><path d="M0 0 H11.2 L5.6 5.8 Z" fill="#000"/></svg><svg class="a" style="left:1187.00px;top:158.50px;" width="11.20" height="5.80" viewBox="0 0 11.2 5.8"><path d="M0 0 H11.2 L5.6 5.8 Z" fill="#000"/></svg><svg class="a" style="left:2604.10px;top:142.50px;" width="32.60" height="32.10" viewBox="0 0 32.6 32.1"><g transform="scale(1.0000,1.0000)"><path d="M16.3 0 L32.6 4.5 V25 L16.3 32.1 L0 25 V4.5 Z" fill="#c8e5f6" stroke="#86c2d8" stroke-width="1.3"/><path d="M16.3 0 V32.1 M0 4.5 L16.3 8.3 L32.6 4.5 M0 25 L16.3 20 L32.6 25" fill="none" stroke="#8cc6da" stroke-width="1"/><path d="M16.3 0 L32.6 4.5 V25 L16.3 32.1 Z" fill="#a9d6f0" opacity="0.45"/><text x="16.6" y="20.2" font-family="Liberation Serif" font-size="21" fill="#3d68b0" text-anchor="middle">R</text></g></svg><svg class="a" style="left:2901.20px;top:158.50px;" width="11.20" height="5.80" viewBox="0 0 11.2 5.8"><path d="M0 0 H11.2 L5.6 5.8 Z" fill="#000"/></svg><svg class="a" style="left:151.00px;top:209.00px;" width="34.00" height="34.00" viewBox="0 0 34 34"><path d="M7.5 1 H24.5 L31.5 8 V32.5 H7.5 Z" fill="#fff" stroke="#8e969d" stroke-width="1.3"/><path d="M24.5 1 V8 H31.5" fill="#fff" stroke="#8e969d" stroke-width="1.2"/><circle cx="9.5" cy="14.3" r="9.2" fill="#5a7eb4"/><text x="9.6" y="19.6" font-family="Liberation Sans" font-weight="bold" font-size="14.5" fill="#fff" text-anchor="middle">R</text></svg><svg class="a" style="left:321.30px;top:219.00px;" width="16.00" height="16.00" viewBox="0 0 16 16"><path d="M2 2 L14 14 M14 2 L2 14" stroke="#b9b9b9" stroke-width="3.2"/></svg><svg class="a" style="left:151.50px;top:264.50px;" width="33.00" height="27.50" viewBox="0 0 33 27.5"><path d="M1.2 13.3 L15.4 0.9 V6 H31.2 V20.6 H15.4 V25.8 Z" fill="#ececee" stroke="#a9aeb3" stroke-width="1.4" stroke-linejoin="round"/></svg><svg class="a" style="left:189.00px;top:264.50px;" width="33.00" height="27.50" viewBox="0 0 33 27.5"><path d="M31.2 13.3 L17 0.9 V6 H1.2 V20.6 H17 V25.8 Z" fill="#f2f3f5" stroke="#d9dcdf" stroke-width="1.4" stroke-linejoin="round"/></svg><div class="a" style="left:237.20px;top:258.00px;width:1.70px;height:37.00px;background:linear-gradient(to bottom, rgba(190,194,198,0) 0%, #c2c6ca 22%, #c2c6ca 78%, rgba(190,194,198,0) 100%);"></div><div class="a" style="left:238.90px;top:258.00px;width:1.60px;height:37.00px;background:linear-gradient(to bottom, rgba(255,255,255,0) 0%, #ffffff 22%, #ffffff 78%, rgba(255,255,255,0) 100%);"></div><svg class="a" style="left:256.00px;top:265.00px;" width="34.00" height="25.00" viewBox="0 0 34 25"><rect x="9.5" y="0.8" width="23.2" height="22.9" rx="3" fill="#f7f9fb" stroke="#aab4bd" stroke-width="1.4"/><path d="M9.5 7.2 V3.8 Q9.5 0.8 12.5 0.8 H29.7 Q32.7 0.8 32.7 3.8 V7.2 Z" fill="#d9e9fb"/><path d="M2 20.5 L9 13.5 L6.6 11 H15.3 V19.7 L12.9 17.3 L5.9 24.3 Z" fill="#e3e5e8" stroke="#8797a6" stroke-width="1.3" stroke-linejoin="round"/></svg><div class="a" style="left:305.30px;top:258.00px;width:1.70px;height:37.00px;background:linear-gradient(to bottom, rgba(190,194,198,0) 0%, #c2c6ca 22%, #c2c6ca 78%, rgba(190,194,198,0) 100%);"></div><div class="a" style="left:307.00px;top:258.00px;width:1.60px;height:37.00px;background:linear-gradient(to bottom, rgba(255,255,255,0) 0%, #ffffff 22%, #ffffff 78%, rgba(255,255,255,0) 100%);"></div><svg class="a" style="left:328.00px;top:264.00px;" width="27.80" height="28.30" viewBox="0 0 27.8 28.3"><g transform="scale(0.9858,1.0071)"><rect x="0.6" y="0.6" width="27" height="26.9" rx="2.6" fill="#8ab3e0" stroke="#7a9cc2" stroke-width="1.2"/><rect x="4.3" y="1.3" width="20.3" height="11.3" fill="#fff"/><rect x="6.4" y="17.5" width="14.7" height="10" fill="#fff"/><rect x="8.9" y="19.6" width="4.4" height="7.9" fill="#8ab3e0"/></g></svg><div class="a" style="left:380.60px;top:263.00px;width:27.90px;height:26.50px;background:#fff;border:2px solid #a6a6a6;border-radius:6px;box-sizing:border-box;"></div><div class="a" style="left:610.90px;top:258.00px;width:1.70px;height:37.00px;background:linear-gradient(to bottom, rgba(190,194,198,0) 0%, #c2c6ca 22%, #c2c6ca 78%, rgba(190,194,198,0) 100%);"></div><div class="a" style="left:612.60px;top:258.00px;width:1.60px;height:37.00px;background:linear-gradient(to bottom, rgba(255,255,255,0) 0%, #ffffff 22%, #ffffff 78%, rgba(255,255,255,0) 100%);"></div><svg class="a" style="left:633.50px;top:260.80px;" width="31.00" height="32.00" viewBox="0 0 31 32"><defs><radialGradient id="mg" cx="0.4" cy="0.35" r="0.7"><stop offset="0" stop-color="#ffffff"/><stop offset="1" stop-color="#bcd3ee"/></radialGradient></defs><path d="M18.5 19 L28.5 29.5" stroke="#8a6a45" stroke-width="4.6" stroke-linecap="round"/><path d="M18.5 19 L28.5 29.5" stroke="#b78a54" stroke-width="2.4" stroke-linecap="round"/><circle cx="11" cy="11" r="9.6" fill="url(#mg)" stroke="#8f9ca8" stroke-width="2.4"/></svg><svg class="a" style="left:683.50px;top:257.00px;" width="40.00" height="36.00" viewBox="0 0 40 36"><defs><linearGradient id="wg" x1="0" y1="0" x2="1" y2="1"><stop offset="0" stop-color="#8a8f94"/><stop offset="1" stop-color="#2f3236"/></linearGradient></defs><path d="M3.5 32 L27.5 10.5" stroke="url(#wg)" stroke-width="6" stroke-linecap="butt"/><path d="M3.5 32 L7.3 28.6" stroke="#6d9fcf" stroke-width="6"/><path d="M24 13.6 L27.5 10.5" stroke="#6d9fcf" stroke-width="6"/><g stroke="#f0925a" stroke-width="2.3" stroke-linecap="butt"><path d="M26.1 0.2 V4"/><path d="M29.7 7.3 L36.4 1.1"/><path d="M32 11 H38.2"/><path d="M30.6 15.4 L35.4 19.7"/><path d="M27.3 17.8 L28.2 21.6"/><path d="M13 7.8 L19.2 9.2"/><path d="M17.3 1.1 L21.6 5.4"/></g></svg><svg class="a" style="left:735.00px;top:275.30px;" width="11.20" height="5.80" viewBox="0 0 11.2 5.8"><path d="M0 0 H11.2 L5.6 5.8 Z" fill="#000"/></svg><div class="a" style="left:753.90px;top:258.00px;width:1.70px;height:37.00px;background:linear-gradient(to bottom, rgba(190,194,198,0) 0%, #c2c6ca 22%, #c2c6ca 78%, rgba(190,194,198,0) 100%);"></div><div class="a" style="left:755.60px;top:258.00px;width:1.60px;height:37.00px;background:linear-gradient(to bottom, rgba(255,255,255,0) 0%, #ffffff 22%, #ffffff 78%, rgba(255,255,255,0) 100%);"></div><svg class="a" style="left:776.60px;top:261.60px;" width="30.00" height="28.00" viewBox="0 0 30 28"><rect x="2.5" y="0.5" width="26.5" height="26.5" rx="2" fill="#fff" stroke="#b7bec5" stroke-width="1"/><path d="M7 6.0 H28" stroke="#9ec0e6" stroke-width="0.9"/><path d="M7 9.6 H28" stroke="#9ec0e6" stroke-width="0.9"/><path d="M7 13.2 H28" stroke="#9ec0e6" stroke-width="0.9"/><path d="M7 16.8 H28" stroke="#9ec0e6" stroke-width="0.9"/><path d="M7 20.4 H28" stroke="#9ec0e6" stroke-width="0.9"/><path d="M7 24.0 H28" stroke="#9ec0e6" stroke-width="0.9"/><path d="M9 1 V27" stroke="#f0a0a0" stroke-width="0.9"/><path d="M0.5 4.0 H5" stroke="#7d858c" stroke-width="1.3"/><path d="M0.5 7.6 H5" stroke="#7d858c" stroke-width="1.3"/><path d="M0.5 11.2 H5" stroke="#7d858c" stroke-width="1.3"/><path d="M0.5 14.8 H5" stroke="#7d858c" stroke-width="1.3"/><path d="M0.5 18.4 H5" stroke="#7d858c" stroke-width="1.3"/><path d="M0.5 22.0 H5" stroke="#7d858c" stroke-width="1.3"/><path d="M0.5 25.6 H5" stroke="#7d858c" stroke-width="1.3"/></svg><svg class="a" style="left:1100.00px;top:262.50px;" width="42.00" height="27.00" viewBox="0 0 42 27"><rect x="0.9" y="0.9" width="22.5" height="25" rx="3" fill="#fff" stroke="#d3d6d9" stroke-width="1.4"/><rect x="3.8" y="10" width="14" height="6.3" fill="#b9d3f4"/><path d="M19.9 10 H30.3 V3.8 L40.7 13.1 L30.3 23 V16.3 H19.9 Z" fill="#4eaa5f"/></svg><div class="a" style="left:1212.80px;top:258.00px;width:1.70px;height:37.00px;background:linear-gradient(to bottom, rgba(190,194,198,0) 0%, #c2c6ca 22%, #c2c6ca 78%, rgba(190,194,198,0) 100%);"></div><div class="a" style="left:1214.50px;top:258.00px;width:1.60px;height:37.00px;background:linear-gradient(to bottom, rgba(255,255,255,0) 0%, #ffffff 22%, #ffffff 78%, rgba(255,255,255,0) 100%);"></div><svg class="a" style="left:1231.00px;top:262.50px;" width="42.00" height="27.00" viewBox="0 0 42 27"><rect x="0.9" y="0.9" width="22.5" height="25" rx="3" fill="#fff" stroke="#d3d6d9" stroke-width="1.4"/><path d="M12.5 18.5 C17 16 17 9 11 9 H8 V5.5 L2.8 10.6 L8 15.5 V12.2 H11 C13.5 12.2 14 15.5 12.5 18.5 Z" fill="#2f64d8"/><path d="M20.3 10 H30 V3.8 L40.5 13.1 L30 23 V16.3 H20.3 Z" fill="#4eaa5f"/></svg><div class="a" style="left:1280.30px;top:258.00px;width:1.70px;height:37.00px;background:linear-gradient(to bottom, rgba(190,194,198,0) 0%, #c2c6ca 22%, #c2c6ca 78%, rgba(190,194,198,0) 100%);"></div><div class="a" style="left:1282.00px;top:258.00px;width:1.60px;height:37.00px;background:linear-gradient(to bottom, rgba(255,255,255,0) 0%, #ffffff 22%, #ffffff 78%, rgba(255,255,255,0) 100%);"></div><svg class="a" style="left:1299.00px;top:262.50px;" width="40.00" height="27.00" viewBox="0 0 40 27"><rect x="0.9" y="0.9" width="23.2" height="25" rx="1.5" fill="#fff" stroke="#b4bac0" stroke-width="1.5"/><path d="M17.2 10.5 H30.2 V4.8 L39.5 13.5 L30.2 22 V16.3 H17.2 Z" fill="#8db5e2"/></svg><svg class="a" style="left:1445.00px;top:273.50px;" width="11.20" height="5.80" viewBox="0 0 11.2 5.8"><path d="M0 0 H11.2 L5.6 5.8 Z" fill="#000"/></svg><div class="a" style="left:1464.90px;top:258.00px;width:1.70px;height:37.00px;background:linear-gradient(to bottom, rgba(190,194,198,0) 0%, #c2c6ca 22%, #c2c6ca 78%, rgba(190,194,198,0) 100%);"></div><div class="a" style="left:1466.60px;top:258.00px;width:1.60px;height:37.00px;background:linear-gradient(to bottom, rgba(255,255,255,0) 0%, #ffffff 22%, #ffffff 78%, rgba(255,255,255,0) 100%);"></div><svg class="a" style="left:1489.00px;top:264.10px;" width="25.00" height="21.00" viewBox="0 0 25 21"><g fill="#9aa0a8"><rect x="0" y="0" width="17.2" height="2"/><rect x="6.6" y="4.4" width="17.4" height="2.1"/><rect x="6.6" y="9" width="17.4" height="2"/><rect x="0" y="13.3" width="17.2" height="2"/><rect x="6.6" y="17.8" width="17.4" height="2"/></g></svg><svg class="a" style="left:408.50px;top:1077.00px;" width="11.00" height="16.00" viewBox="0 0 11 16"><path d="M0 6 L5.5 0 L11 6 Z M0 10 H11 L5.5 16 Z" fill="#70777d"/></svg><svg class="a" style="left:1511.00px;top:1077.00px;" width="11.00" height="16.00" viewBox="0 0 11 16"><path d="M0 6 L5.5 0 L11 6 Z M0 10 H11 L5.5 16 Z" fill="#70777d"/></svg><svg class="a" style="left:414.30px;top:1137.00px;" width="15.50" height="15.50" viewBox="0 0 15.5 15.5"><path d="M2 2 L13.5 13.5 M13.5 2 L2 13.5" stroke="#bcbcbc" stroke-width="3"/></svg><svg class="a" style="left:696.60px;top:1137.00px;" width="15.50" height="15.50" viewBox="0 0 15.5 15.5"><path d="M2 2 L13.5 13.5 M13.5 2 L2 13.5" stroke="#bcbcbc" stroke-width="3"/></svg><svg class="a" style="left:140.00px;top:1172.00px;" width="50.00" height="40.00" viewBox="0 0 50 40"><defs><linearGradient id="rl" x1="0" y1="0" x2="0" y2="1"><stop offset="0" stop-color="#c3c4c8"/><stop offset="1" stop-color="#9c9da2"/></linearGradient></defs><path fill-rule="evenodd" fill="url(#rl)" d="M9.5 19.9 A18.5 12.2 0 1 0 46.5 19.9 A18.5 12.2 0 1 0 9.5 19.9 Z M16.7 20.8 A14.2 8.1 0 1 0 45.1 20.8 A14.2 8.1 0 1 0 16.7 20.8 Z"/><path fill-rule="evenodd" fill="#3064b9" d="M24.9 15.2 H37 C41.5 15.2 43.6 17.8 43.6 21.3 C43.6 24.3 42 26.6 39 27.6 L45.1 36.6 H38.2 L33 28.4 H31 V36.6 H24.9 Z M31 19.7 V24.2 H36 C37.3 24.2 37.8 23.2 37.8 22 C37.8 20.7 37.3 19.7 36 19.7 Z"/></svg><svg class="a" style="left:199.80px;top:1193.50px;" width="11.20" height="5.80" viewBox="0 0 11.2 5.8"><path d="M0 0 H11.2 L5.6 5.8 Z" fill="#000"/></svg><svg class="a" style="left:610.00px;top:1182.00px;" width="28.00" height="23.00" viewBox="0 0 28 23"><path d="M0.7 20.8 C2 12 7 6.2 15 6.2 H16.5 V1.2 L26.1 10 L16.5 18.5 V13.8 H15 C9 13.8 4.5 16.5 0.7 20.8 Z" fill="#eceef2" stroke="#b0b5bc" stroke-width="1.2" stroke-linejoin="round"/></svg><svg class="a" style="left:1483.00px;top:1176.90px;" width="42.00" height="33.00" viewBox="0 0 42 33"><path d="M37 2 L24 17" stroke="#dfe2e5" stroke-width="3.5" stroke-linecap="round"/><path d="M24 15 L17 24 L2 29 Q6 31 14 32 L19 31 L27 23 Z" fill="#e8eaec" stroke="#cdd1d5" stroke-width="1"/></svg><svg class="a" style="left:1567.80px;top:264.30px;" width="45.00" height="28.00" viewBox="0 0 45 28"><defs><linearGradient id="fg" x1="0" y1="0" x2="0" y2="1"><stop offset="0" stop-color="#f6efb9"/><stop offset="1" stop-color="#dbb95a"/></linearGradient></defs><path d="M4.3 26 V6.4 Q4.3 5.2 5.6 5.2 H12.6 L15.6 0.8 H28 L31.3 4.5 V26 Z" fill="#e9e9e9" stroke="#c9a94f" stroke-width="1.6"/><path d="M0.8 11.9 H22.9 L30.8 26.2 H7.4 Z" fill="url(#fg)" stroke="#c6a447" stroke-width="1.6" stroke-linejoin="round"/><path d="M20.3 11.3 C22.5 6.5 26.5 5.3 30.5 5.3 H35.1 V0.4 L43.8 7.6 L35.1 14.8 V10.1 H30.5 C27.5 10.1 25 10.6 23.2 12.2 Z" fill="#50b48b"/></svg><svg class="a" style="left:1627.60px;top:263.60px;" width="28.10" height="28.80" viewBox="0 0 28.1 28.8"><g transform="scale(0.9965,1.0249)"><rect x="0.6" y="0.6" width="27" height="26.9" rx="2.6" fill="#8ab3e0" stroke="#7a9cc2" stroke-width="1.2"/><rect x="4.3" y="1.3" width="20.3" height="11.3" fill="#fff"/><rect x="6.4" y="17.5" width="14.7" height="10" fill="#fff"/><rect x="8.9" y="19.6" width="4.4" height="7.9" fill="#8ab3e0"/></g></svg><div class="a" style="left:1674.00px;top:258.00px;width:1.70px;height:37.00px;background:linear-gradient(to bottom, rgba(190,194,198,0) 0%, #c2c6ca 22%, #c2c6ca 78%, rgba(190,194,198,0) 100%);"></div><div class="a" style="left:1675.70px;top:258.00px;width:1.60px;height:37.00px;background:linear-gradient(to bottom, rgba(255,255,255,0) 0%, #ffffff 22%, #ffffff 78%, rgba(255,255,255,0) 100%);"></div><svg class="a" style="left:1691.00px;top:264.00px;" width="42.00" height="27.00" viewBox="0 0 42 27"><rect x="0.8" y="0.8" width="28" height="24.8" rx="2.5" fill="#fafbfc" stroke="#aab3bc" stroke-width="1.4"/><path d="M0.8 4 Q0.8 0.8 3.3 0.8 H26.3 Q28.8 0.8 28.8 4 V4.5 H0.8 Z" fill="#dde3ea"/><path d="M10 4.5 V25.6 M19.7 4.5 V25.6 M0.8 4.5 H28.8 M0.8 11.3 H28.8 M0.8 18.6 H28.8" stroke="#aab3bc" stroke-width="1.2"/><path d="M15 16 C17 11.5 20 10.5 23.5 10.5 H31 V1.8 L40.8 9 L31 16.6 V14 H23.5 C20.5 14 18 15 16.5 17 Z" fill="#50b48b"/></svg><svg class="a" style="left:1927.70px;top:273.50px;" width="11.20" height="5.80" viewBox="0 0 11.2 5.8"><path d="M0 0 H11.2 L5.6 5.8 Z" fill="#000"/></svg><div class="a" style="left:1955.90px;top:258.00px;width:1.70px;height:37.00px;background:linear-gradient(to bottom, rgba(190,194,198,0) 0%, #c2c6ca 22%, #c2c6ca 78%, rgba(190,194,198,0) 100%);"></div><div class="a" style="left:1957.60px;top:258.00px;width:1.60px;height:37.00px;background:linear-gradient(to bottom, rgba(255,255,255,0) 0%, #ffffff 22%, #ffffff 78%, rgba(255,255,255,0) 100%);"></div><svg class="a" style="left:1972.40px;top:263.20px;" width="28.00" height="28.00" viewBox="0 0 28 28"><circle cx="13.8" cy="13.8" r="13.8" fill="#e6e6e6"/><path d="M13.8 13.8 V0 A13.8 13.8 0 0 1 23.6 23.6 Z" fill="#6e9e94"/><circle cx="13.8" cy="13.8" r="3" fill="#f4f4f4"/></svg><svg class="a" style="left:2122.00px;top:274.00px;" width="11.20" height="5.80" viewBox="0 0 11.2 5.8"><path d="M0 0 H11.2 L5.6 5.8 Z" fill="#000"/></svg><div class="a" style="left:2150.90px;top:258.00px;width:1.70px;height:37.00px;background:linear-gradient(to bottom, rgba(190,194,198,0) 0%, #c2c6ca 22%, #c2c6ca 78%, rgba(190,194,198,0) 100%);"></div><div class="a" style="left:2152.60px;top:258.00px;width:1.60px;height:37.00px;background:linear-gradient(to bottom, rgba(255,255,255,0) 0%, #ffffff 22%, #ffffff 78%, rgba(255,255,255,0) 100%);"></div><svg class="a" style="left:2166.00px;top:257.00px;" width="37.00" height="36.00" viewBox="0 0 37 36"><ellipse cx="24" cy="32.5" rx="10" ry="2.8" fill="#9aa0a6" opacity="0.55"/><path d="M34 3 L24.5 13" stroke="#d0705e" stroke-width="3.6" stroke-linecap="round"/><path d="M21 10 Q27 13 27.5 18 L14 33 Q6 30 1 21 Z" fill="#dcc48a" stroke="#c8ad6c" stroke-width="1"/><path d="M17.8 12.5 L25 18.5 M15.8 15 L23 21" stroke="#b5865a" stroke-width="1.4"/></svg><svg class="a" style="left:2708.70px;top:266.20px;" width="25.00" height="22.00" viewBox="0 0 25 22"><g fill="#a3aab0"><rect x="0" y="0" width="24.5" height="2"/><rect x="0" y="6.8" width="24.5" height="2"/><rect x="0" y="13.4" width="24.5" height="2"/><rect x="0" y="20" width="24.5" height="2"/></g></svg><svg class="a" style="left:2803.00px;top:273.50px;" width="11.20" height="5.80" viewBox="0 0 11.2 5.8"><path d="M0 0 H11.2 L5.6 5.8 Z" fill="#000"/></svg><div class="a" style="left:2831.20px;top:258.00px;width:1.70px;height:37.00px;background:linear-gradient(to bottom, rgba(190,194,198,0) 0%, #c2c6ca 22%, #c2c6ca 78%, rgba(190,194,198,0) 100%);"></div><div class="a" style="left:2832.90px;top:258.00px;width:1.60px;height:37.00px;background:linear-gradient(to bottom, rgba(255,255,255,0) 0%, #ffffff 22%, #ffffff 78%, rgba(255,255,255,0) 100%);"></div><svg class="a" style="left:2840.70px;top:252.50px;" width="40.00" height="40.00" viewBox="0 0 40 40"><defs><linearGradient id="rg" x1="0" y1="0" x2="1" y2="1"><stop offset="0" stop-color="#f1f3f7"/><stop offset="1" stop-color="#e1e9f8"/></linearGradient></defs><path d="M37.61 30.30 A16 16 0 1 1 32.93 9.19 L38.1 7.2 L38.1 20.9 L24.3 20.9 L27.75 15.37 A8 8 0 1 0 30.68 26.30 A4 4 0 0 1 37.61 30.30 Z" fill="url(#rg)" stroke="#9ea5ae" stroke-width="1.3" stroke-linejoin="round"/></svg><svg class="a" style="left:2890.90px;top:273.50px;" width="11.20" height="5.80" viewBox="0 0 11.2 5.8"><path d="M0 0 H11.2 L5.6 5.8 Z" fill="#000"/></svg><svg class="a" style="left:1602.60px;top:321.90px;" width="11.20" height="5.80" viewBox="0 0 11.2 5.8"><path d="M0 0 H11.2 L5.6 5.8 Z" fill="#000"/></svg><div class="a" style="left:1632.10px;top:303.00px;width:1.70px;height:37.00px;background:linear-gradient(to bottom, rgba(190,194,198,0) 0%, #c2c6ca 22%, #c2c6ca 78%, rgba(190,194,198,0) 100%);"></div><div class="a" style="left:1633.80px;top:303.00px;width:1.60px;height:37.00px;background:linear-gradient(to bottom, rgba(255,255,255,0) 0%, #ffffff 22%, #ffffff 78%, rgba(255,255,255,0) 100%);"></div><svg class="a" style="left:1651.00px;top:308.00px;" width="34.00" height="31.00" viewBox="0 0 34 31"><rect x="7" y="0" width="19.8" height="19.5" rx="3.5" fill="#b172c6"/><rect x="13.6" y="10.9" width="19.4" height="19.8" rx="3.5" fill="#77a3e0"/><rect x="0.2" y="6.8" width="19.8" height="19.4" rx="3.5" fill="#b5c98a"/></svg><svg class="a" style="left:1940.70px;top:321.90px;" width="11.20" height="5.80" viewBox="0 0 11.2 5.8"><path d="M0 0 H11.2 L5.6 5.8 Z" fill="#000"/></svg><div class="a" style="left:2625.80px;top:307.90px;width:266.20px;height:37.40px;background:#fff;border:1.6px solid #d0d4d8;border-radius:6px;box-sizing:border-box;"></div><svg class="a" style="left:2640.00px;top:314.30px;" width="29.50" height="27.00" viewBox="0 0 29.5 27"><circle cx="10.5" cy="10.5" r="8" fill="none" stroke="#a8adb2" stroke-width="4"/><path d="M16 16 L26.5 25.5" stroke="#a8adb2" stroke-width="4.6"/></svg><svg class="a" style="left:1566.00px;top:405.20px;" width="26.00" height="26.00" viewBox="0 0 26 26"><defs><linearGradient id="dg" x1="0" y1="0" x2="0" y2="1"><stop offset="0" stop-color="#a9c8ea"/><stop offset="1" stop-color="#6f9dd4"/></linearGradient></defs><circle cx="12.8" cy="13" r="12.3" fill="url(#dg)" stroke="#7b9bc4" stroke-width="1"/><path d="M9.5 6.5 L17.8 13 L9.5 19.5 Z" fill="#fff"/></svg><svg class="a" style="left:2839.20px;top:406.00px;" width="31.00" height="26.50" viewBox="0 0 31 26.5"><rect x="0.8" y="0.8" width="29" height="24.8" rx="3" fill="#fafbfc" stroke="#b8c0c8" stroke-width="1.3"/><path d="M0.8 4 Q0.8 0.8 3.8 0.8 H26.8 Q29.8 0.8 29.8 4 V4.8 H0.8 Z" fill="#cfe3f5"/><path d="M8 4.8 V25.6 M15.3 4.8 V25.6 M22.6 4.8 V25.6 M0.8 11.5 H29.8 M0.8 18.4 H29.8" stroke="#c5ccd3" stroke-width="1"/></svg><svg class="a" style="left:2839.00px;top:675.90px;" width="32.00" height="27.00" viewBox="0 0 32 27"><path d="M4 1 H29 Q31 1 31 3 Q31 5 29 5 H27 V22 H6 Q4 22 4 20 Z" fill="#fbfbfc" stroke="#a9b1b9" stroke-width="1.1"/><path d="M1 22 H25 Q27 22 27 24.5 Q27 26 25 26 H3 Q1 26 1 24 Z" fill="#eef0f2" stroke="#a9b1b9" stroke-width="1.1"/><g stroke="#8d99a6" stroke-width="0.9" fill="none"><path d="M7.5 6.5 l1.3 1.3 l1.3 -1.3 l1.3 1.3 l1.3 -1.3 M15 6.5 l1.3 1.3 l1.3 -1.3 l1.3 1.3 l1.3 -1.3"/><path d="M7.5 11 l1.3 1.3 l1.3 -1.3 M13 11 l1.3 1.3 l1.3 -1.3 l1.3 1.3 l1.3 -1.3 l1.3 1.3"/><path d="M7.5 15.5 l1.3 1.3 l1.3 -1.3 l1.3 1.3 M15 15.5 l1.3 1.3 l1.3 -1.3 l1.3 1.3 l1.3 -1.3"/></g></svg><svg class="a" style="left:1567.80px;top:850.60px;" width="42.00" height="30.00" viewBox="0 0 42 30"><defs><linearGradient id="nf" x1="0" y1="0" x2="0" y2="1"><stop offset="0" stop-color="#f6e9a0"/><stop offset="1" stop-color="#e2bb47"/></linearGradient></defs><path d="M7 28.7 V4 Q7 2 9 2 H35 Q40 2 40.5 6 V26.5 Q40.5 28.7 38.5 28.7 Z" fill="#ececec" stroke="#c9a94f" stroke-width="1.3"/><path d="M7 28.7 V10.5 H35.5 Q38 10.5 38 13 V28.7 Z" fill="url(#nf)" stroke="#c9a94f" stroke-width="1.3"/></svg><svg class="a" style="left:1566.90px;top:849.60px;" width="23.80" height="23.80" viewBox="0 0 23.8 23.8"><circle cx="11.9" cy="11.9" r="10.9" fill="#4eae84"/><rect x="4.2" y="10.0" width="15.4" height="3.8" fill="#fff"/><rect x="9.8" y="4.300000000000001" width="4.2" height="15.2" fill="#fff"/></svg><div class="a" style="left:1769.90px;top:846.00px;width:1.70px;height:37.00px;background:linear-gradient(to bottom, rgba(190,194,198,0) 0%, #c2c6ca 22%, #c2c6ca 78%, rgba(190,194,198,0) 100%);"></div><div class="a" style="left:1771.60px;top:846.00px;width:1.60px;height:37.00px;background:linear-gradient(to bottom, rgba(255,255,255,0) 0%, #ffffff 22%, #ffffff 78%, rgba(255,255,255,0) 100%);"></div><div class="a" style="left:1796.00px;top:852.50px;width:26.80px;height:27.50px;background:#fff;border:1.5px solid #cfd4d8;border-radius:2px;box-sizing:border-box;"></div><svg class="a" style="left:1783.60px;top:849.60px;" width="23.80" height="23.80" viewBox="0 0 23.8 23.8"><circle cx="11.9" cy="11.9" r="10.9" fill="#43a165"/><rect x="4.2" y="10.0" width="15.4" height="3.8" fill="#fff"/><rect x="9.8" y="4.300000000000001" width="4.2" height="15.2" fill="#fff"/></svg><svg class="a" style="left:1944.40px;top:863.90px;" width="11.20" height="5.80" viewBox="0 0 11.2 5.8"><path d="M0 0 H11.2 L5.6 5.8 Z" fill="#000"/></svg><div class="a" style="left:1972.90px;top:845.00px;width:1.70px;height:34.00px;background:linear-gradient(to bottom, rgba(190,194,198,0) 0%, #c2c6ca 22%, #c2c6ca 78%, rgba(190,194,198,0) 100%);"></div><div class="a" style="left:1974.60px;top:845.00px;width:1.60px;height:34.00px;background:linear-gradient(to bottom, rgba(255,255,255,0) 0%, #ffffff 22%, #ffffff 78%, rgba(255,255,255,0) 100%);"></div><div class="a" style="left:2000.50px;top:853.50px;width:25.50px;height:27.00px;background:#fff;border:1.5px solid #cfd4d8;border-radius:2px;box-sizing:border-box;"></div><svg class="a" style="left:1988.50px;top:849.50px;" width="24.00" height="24.00" viewBox="0 0 24 24"><defs><radialGradient id="dr" cx="0.4" cy="0.35" r="0.7"><stop offset="0" stop-color="#d8504a"/><stop offset="1" stop-color="#a52a22"/></radialGradient></defs><circle cx="11.5" cy="11.5" r="11" fill="url(#dr)"/><path d="M7 7 L16 16 M16 7 L7 16" stroke="#fff" stroke-width="3.4"/></svg><svg class="a" style="left:2138.00px;top:852.50px;" width="36.00" height="28.00" viewBox="0 0 36 28"><rect x="0.8" y="0.8" width="22" height="22" fill="#fff" stroke="#c3c8cd" stroke-width="1.3"/><rect x="14.5" y="5.2" width="20.5" height="22" fill="#fff" stroke="#a9b0b6" stroke-width="1.3"/><path d="M9 15 H19 V11 L27 17 L19 23 V19 H9 Z" fill="#4aa6e8"/></svg><div class="a" style="left:2296.60px;top:846.00px;width:1.70px;height:37.00px;background:linear-gradient(to bottom, rgba(190,194,198,0) 0%, #c2c6ca 22%, #c2c6ca 78%, rgba(190,194,198,0) 100%);"></div><div class="a" style="left:2298.30px;top:846.00px;width:1.60px;height:37.00px;background:linear-gradient(to bottom, rgba(255,255,255,0) 0%, #ffffff 22%, #ffffff 78%, rgba(255,255,255,0) 100%);"></div><svg class="a" style="left:2318.00px;top:847.80px;" width="34.00" height="34.00" viewBox="0 0 34 34"><defs><radialGradient id="gg" cx="0.3" cy="0.4" r="0.8"><stop offset="0" stop-color="#b5f0f8"/><stop offset="0.5" stop-color="#5fb6d8"/><stop offset="1" stop-color="#3f93c2"/></radialGradient></defs><polygon points="12.56,5.21 14.19,0.64 19.81,0.64 21.44,5.21 22.20,5.52 26.58,3.45 30.55,7.42 28.48,11.80 28.79,12.56 33.36,14.19 33.36,19.81 28.79,21.44 28.48,22.20 30.55,26.58 26.58,30.55 22.20,28.48 21.44,28.79 19.81,33.36 14.19,33.36 12.56,28.79 11.80,28.48 7.42,30.55 3.45,26.58 5.52,22.20 5.21,21.44 0.64,19.81 0.64,14.19 5.21,12.56 5.52,11.80 3.45,7.42 7.42,3.45 11.80,5.52" fill="url(#gg)" stroke="#4b7892" stroke-width="1.1" stroke-linejoin="round"/><circle cx="17" cy="17" r="4.2" fill="#f3f6f7" stroke="#4b7892" stroke-width="1.1"/></svg><svg class="a" style="left:2435.80px;top:863.90px;" width="11.20" height="5.80" viewBox="0 0 11.2 5.8"><path d="M0 0 H11.2 L5.6 5.8 Z" fill="#000"/></svg><svg class="a" style="left:2859.90px;top:842.20px;" width="40.00" height="40.00" viewBox="0 0 40 40"><defs><linearGradient id="rg" x1="0" y1="0" x2="1" y2="1"><stop offset="0" stop-color="#f1f3f7"/><stop offset="1" stop-color="#e1e9f8"/></linearGradient></defs><path d="M37.61 30.30 A16 16 0 1 1 32.93 9.19 L38.1 7.2 L38.1 20.9 L24.3 20.9 L27.75 15.37 A8 8 0 1 0 30.68 26.30 A4 4 0 0 1 37.61 30.30 Z" fill="url(#rg)" stroke="#9ea5ae" stroke-width="1.3" stroke-linejoin="round"/></svg><div class="a" style="left:1566.40px;top:898.00px;width:27.60px;height:28.00px;background:#fff;border:2px solid #a6a6a6;border-radius:6px;box-sizing:border-box;"></div><svg class="a" style="left:1608.00px;top:893.50px;" width="39.00" height="35.00" viewBox="0 0 39 35"><path d="M5 17 V34 H33.5 V17 L19.2 4.5 Z" fill="#e6e8ea" stroke="#9aa3ab" stroke-width="1.5"/><rect x="15.3" y="21" width="8.4" height="13" fill="#b78a55"/><path d="M1.5 19.5 L19.2 3 L37 19.5" fill="none" stroke="#cc3d2d" stroke-width="3.6" stroke-linejoin="miter"/></svg><svg class="a" style="left:1745.30px;top:905.50px;" width="12.00" height="22.00" viewBox="0 0 12 22"><path d="M1.5 1.5 L10 11 L1.5 20.5" fill="none" stroke="#b8bdc2" stroke-width="1.8"/></svg><svg class="a" style="left:1914.40px;top:905.50px;" width="12.00" height="22.00" viewBox="0 0 12 22"><path d="M1.5 1.5 L10 11 L1.5 20.5" fill="none" stroke="#b8bdc2" stroke-width="1.8"/></svg><svg class="a" style="left:2818.80px;top:894.30px;" width="32.50" height="32.30" viewBox="0 0 32.5 32.3"><g transform="scale(0.9969,1.0062)"><path d="M16.3 0 L32.6 4.5 V25 L16.3 32.1 L0 25 V4.5 Z" fill="#c8e5f6" stroke="#86c2d8" stroke-width="1.3"/><path d="M16.3 0 V32.1 M0 4.5 L16.3 8.3 L32.6 4.5 M0 25 L16.3 20 L32.6 25" fill="none" stroke="#8cc6da" stroke-width="1"/><path d="M16.3 0 L32.6 4.5 V25 L16.3 32.1 Z" fill="#a9d6f0" opacity="0.45"/><text x="16.6" y="20.2" font-family="Liberation Serif" font-size="21" fill="#3d68b0" text-anchor="middle">R</text></g></svg><div class="t" style="left:2880.50px;top:910.90px;font-size:26px;color:#000;">...</div><svg class="a" style="left:1689.20px;top:947.40px;" width="21.60" height="14.50" viewBox="0 0 21.6 14.5"><path d="M0 14.5 L10.8 0 L21.6 14.5 Z" fill="#858d99"/></svg><svg class="a" style="left:1636.00px;top:984.00px;" width="29.00" height="29.00" viewBox="0 0 29 29"><path d="M1 10.3 L11 0.5 L21.5 10.3 H15.3 V21.8 H28.2 V28.5 H7.3 V10.3 Z" fill="#66c176" stroke="#58b06b" stroke-width="1"/></svg><div class="a" style="left:1579.60px;top:1035.50px;width:27.00px;height:27.50px;background:#fff;border:2px solid #a6a6a6;border-radius:6px;box-sizing:border-box;"></div><div class="a" style="left:1579.60px;top:1085.80px;width:27.00px;height:26.70px;background:#fff;border:2px solid #a6a6a6;border-radius:6px;box-sizing:border-box;"></div><svg class="a" style="left:1633.50px;top:1031.00px;" width="34.00" height="34.00" viewBox="0 0 34 34"><path d="M4.3 1 H22.7 L33 11.3 V32.5 H4.3 Z" fill="#fff" stroke="#a0a6ac" stroke-width="1.3"/><path d="M22.7 1 V11.3 H33" fill="none" stroke="#c3c8cc" stroke-width="1.1"/><path d="M11 5 L21.7 15.8 L11 26.5 L0.3 15.8 Z" fill="#e2583e"/><path d="M9.5 11 L13 14.5 V21 M13 14.5 L15 17" stroke="#fff" stroke-width="1.3" fill="none"/><circle cx="13" cy="21" r="1.5" fill="#fff"/><circle cx="15" cy="17.5" r="1.3" fill="#fff"/><circle cx="9.5" cy="11" r="1.3" fill="#fff"/></svg><svg class="a" style="left:1634.70px;top:1082.50px;" width="32.30" height="32.00" viewBox="0 0 32.3 32"><g transform="scale(0.9908,0.9969)"><path d="M16.3 0 L32.6 4.5 V25 L16.3 32.1 L0 25 V4.5 Z" fill="#c8e5f6" stroke="#86c2d8" stroke-width="1.3"/><path d="M16.3 0 V32.1 M0 4.5 L16.3 8.3 L32.6 4.5 M0 25 L16.3 20 L32.6 25" fill="none" stroke="#8cc6da" stroke-width="1"/><path d="M16.3 0 L32.6 4.5 V25 L16.3 32.1 Z" fill="#a9d6f0" opacity="0.45"/><text x="16.6" y="20.2" font-family="Liberation Serif" font-size="21" fill="#3d68b0" text-anchor="middle">R</text></g></svg><div class="t" style="left:622.80px;top:159.75px;font-size:25px;color:#555b60;letter-spacing:0.064px;">Go to file/function</div>
</body></html>
